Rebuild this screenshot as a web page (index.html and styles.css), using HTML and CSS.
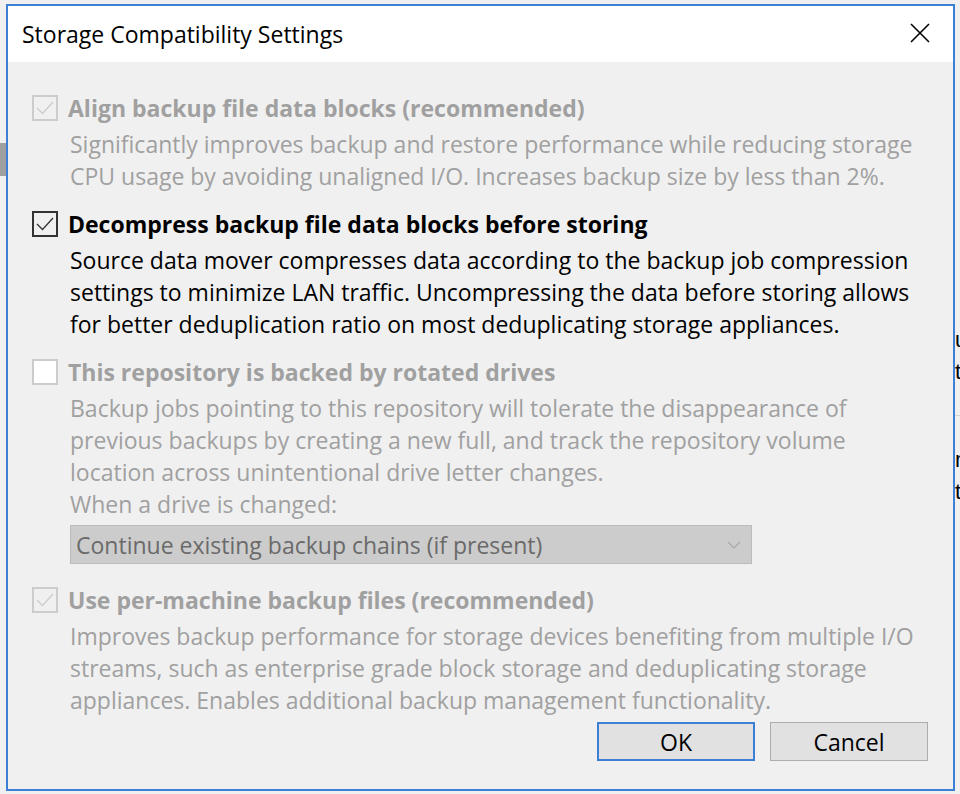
FILE: index.html
```html
<!DOCTYPE html>
<html lang="en">
<head>
  <meta charset="UTF-8">
  <title>Storage Compatibility Settings</title>
  <link rel="stylesheet" href="styles.css">
</head>
<body>

  <!-- bits of the window behind the dialog -->
  <div class="fundo-esq"></div>
  <div class="fundo-dir">
    <span class="letra" style="top: 326px">u</span>
    <span class="letra" style="top: 358px">t</span>
    <span class="linha" style="top: 415px"></span>
    <span class="letra" style="top: 446px">n</span>
    <span class="letra" style="top: 478px">t</span>
  </div>

  <div class="dialogo">
    <div class="titulo">
      <span>Storage Compatibility Settings</span>
      <svg class="fechar" width="20" height="20" viewBox="0 0 20 20">
        <path d="M1 1 L19 19 M19 1 L1 19" stroke="#000" stroke-width="1.6" fill="none"/>
      </svg>
    </div>

    <div class="conteudo">
      <div class="opcao desativada">
        <div class="cabecalho">
          <span class="caixa marcada">
            <svg width="22" height="22" viewBox="0 0 22 22"><path d="M3 11 L8.5 16.5 L19 5" stroke="currentColor" stroke-width="1.3" fill="none"/></svg>
          </span>
          <span class="rotulo">Align backup file data blocks (recommended)</span>
        </div>
        <div class="descricao">
          Significantly improves backup and restore performance while reducing storage<br>
          CPU usage by avoiding unaligned I/O. Increases backup size by less than 2%.
        </div>
      </div>

      <div class="opcao">
        <div class="cabecalho">
          <span class="caixa marcada">
            <svg width="22" height="22" viewBox="0 0 22 22"><path d="M3 11 L8.5 16.5 L19 5" stroke="currentColor" stroke-width="1.3" fill="none"/></svg>
          </span>
          <span class="rotulo">Decompress backup file data blocks before storing</span>
        </div>
        <div class="descricao">
          Source data mover compresses data according to the backup job compression<br>
          settings to minimize LAN traffic. Uncompressing the data before storing allows<br>
          for better deduplication ratio on most deduplicating storage appliances.
        </div>
      </div>

      <div class="opcao desativada">
        <div class="cabecalho">
          <span class="caixa vazia"></span>
          <span class="rotulo">This repository is backed by rotated drives</span>
        </div>
        <div class="descricao">
          Backup jobs pointing to this repository will tolerate the disappearance of<br>
          previous backups by creating a new full, and track the repository volume<br>
          location across unintentional drive letter changes.<br>
          When a drive is changed:
        </div>
        <div class="lista">
          <span>Continue existing backup chains (if present)</span>
          <svg width="14" height="8" viewBox="0 0 14 8"><path d="M1 1 L7 7 L13 1" stroke="#a8a8a8" stroke-width="1.2" fill="none"/></svg>
        </div>
      </div>

      <div class="opcao desativada ultima">
        <div class="cabecalho">
          <span class="caixa marcada">
            <svg width="22" height="22" viewBox="0 0 22 22"><path d="M3 11 L8.5 16.5 L19 5" stroke="currentColor" stroke-width="1.3" fill="none"/></svg>
          </span>
          <span class="rotulo">Use per-machine backup files (recommended)</span>
        </div>
        <div class="descricao">
          Improves backup performance for storage devices benefiting from multiple I/O<br>
          streams, such as enterprise grade block storage and deduplicating storage<br>
          appliances. Enables additional backup management functionality.
        </div>
      </div>

      <div class="botoes">
        <button class="botao padrao">OK</button>
        <button class="botao">Cancel</button>
      </div>
    </div>
  </div>

</body>
</html>
```

FILE: styles.css
```css
body {
  margin: 0;
  background-color: #f0f0f0;
  font-family: "Open Sans", "Noto Sans", sans-serif;
  font-size: 23px;
  color: #000;
  overflow: hidden;
}

.fundo-esq {
  position: absolute;
  left: 0;
  top: 143px;
  width: 6px;
  height: 33px;
  background-color: #a0a0a0;
}

.fundo-dir {
  position: absolute;
  left: 955px;
  top: 0;
  width: 5px;
  height: 794px;
  overflow: hidden;
}

.letra {
  position: absolute;
  left: 0;
  font-family: "Liberation Sans", sans-serif;
  font-size: 22px;
  line-height: 28px;
}

.linha {
  position: absolute;
  left: 0;
  width: 5px;
  height: 1px;
  background-color: #d4d4d4;
}

.dialogo {
  margin: 4px 0 0 6px;
  width: 945px;
  height: 783px;
  border: 2px solid #3d7fd5;
  background-color: #f0f0f0;
  display: flex;
  flex-direction: column;
}

.titulo {
  flex-shrink: 0;
  height: 56px;
  background-color: #fff;
  display: flex;
  align-items: center;
  justify-content: space-between;
  padding: 0 23px 0 14px;
  font-size: 23px;
}

.fechar {
  margin-top: -2px;
}

.conteudo {
  flex: 1;
  padding: 30px 25px 0 24px;
  display: flex;
  flex-direction: column;
}

.opcao {
  margin-bottom: 16px;
}

.opcao.ultima {
  margin-bottom: 0;
}

.cabecalho {
  display: flex;
  align-items: center;
  height: 32px;
  margin-bottom: 4px;
}

.caixa {
  width: 22px;
  height: 22px;
  border: 2px solid #333;
  margin-right: 10px;
  color: #333;
  display: flex;
}

.rotulo {
  font-weight: 700;
  white-space: nowrap;
}

.descricao {
  margin-left: 38px;
  line-height: 32px;
  white-space: nowrap;
}

.desativada {
  color: #a0a0a0;
}

.desativada .caixa {
  border-color: #cccccc;
  color: #cccccc;
}

.desativada .caixa.vazia {
  background-color: #fff;
}

.lista {
  margin: 5px 0 4px 38px;
  width: 665px;
  height: 37px;
  background-color: #cccccc;
  border: 1px solid #bcbcbc;
  display: flex;
  align-items: center;
  justify-content: space-between;
  padding: 0 10px 0 5px;
  color: #6a6a6a;
}

.botoes {
  margin-top: auto;
  margin-bottom: 28px;
  display: flex;
  justify-content: flex-end;
  gap: 15px;
}

.botao {
  width: 158px;
  height: 39px;
  background-color: #e1e1e1;
  border: 1px solid #adadad;
  font-family: "Open Sans", "Noto Sans", sans-serif;
  font-size: 23px;
  color: #000;
  padding: 0;
}

.botao.padrao {
  border: 2px solid #3d7fd5;
}
```
